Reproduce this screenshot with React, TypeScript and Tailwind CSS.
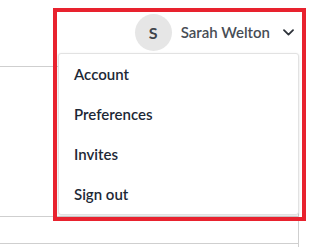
import React from "react";

export default function App() {
  const items = ["Account", "Preferences", "Invites", "Sign out"];
  return (
    <div
      className="relative w-[320px] h-[247px] overflow-hidden bg-white"
      style={{ fontFamily: "Lato, 'Open Sans', sans-serif" }}
    >
      {/* page behind */}
      <div className="h-[66px]" />
      <div className="w-[299px] border-t border-r border-[#cfcfcf]">
        <div className="h-[150px] border-b border-[#cfcfcf]" />
        <div className="h-[27px] border-b border-[#cfcfcf]" />
        <div className="h-[20px]" />
      </div>

      {/* user menu (highlighted) */}
      <div className="absolute left-[57px] top-[12px] w-[245px] h-[205px] outline-4 outline-[#e8222e]">
        <div className="flex items-center justify-end h-[40px] pr-[8px] pt-[1px]">
          <div className="flex items-center justify-center w-[37px] h-[37px] rounded-full bg-[#e6e6e6] text-[16px] font-bold text-[#3e434a]">
            S
          </div>
          <span className="ml-[9px] text-[15px] font-semibold text-[#474d55]">
            Sarah Welton
          </span>
          <svg
            className="ml-[13px]"
            width="11"
            height="7"
            viewBox="0 0 11 7"
            fill="none"
            stroke="#2e333a"
            strokeWidth="1.8"
            strokeLinecap="round"
            strokeLinejoin="round"
          >
            <path d="M1 1.2 L5.5 5.6 L10 1.2" />
          </svg>
        </div>
        <div className="ml-[1px] mt-[1px] w-[241px] rounded-[3px] border border-[#e2e2e2] bg-white shadow-[0_1px_3px_rgba(0,0,0,0.12)]">
          {items.map((it) => (
            <div
              key={it}
              className="flex items-center h-[40px] pl-[15px] text-[15px] font-semibold text-[#1d2836]"
            >
              {it}
            </div>
          ))}
        </div>
      </div>
    </div>
  );
}
